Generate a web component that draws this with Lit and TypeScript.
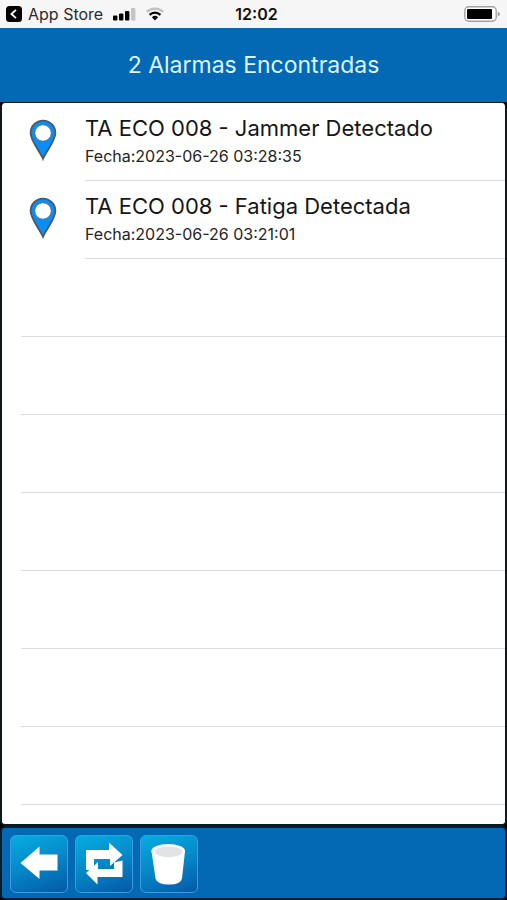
import { LitElement, html, css, svg } from "lit";
import { customElement, property } from "lit/decorators.js";

interface Alarm {
  title: string;
  date: string;
}

const ALARMS: Alarm[] = [
  { title: "TA ECO 008 - Jammer Detectado", date: "2023-06-26 03:28:35" },
  { title: "TA ECO 008 - Fatiga Detectada", date: "2023-06-26 03:21:01" },
];

const EMPTY_ROWS = Array.from({ length: 8 });

@customElement("status-bar")
class StatusBar extends LitElement {
  static styles = css`
    :host {
      display: grid;
      grid-template-columns: 1fr auto 1fr;
      align-items: center;
      height: 28px;
      padding-left: 6px;
      background: #f6f6f6;
      color: #111;
      font-size: 16px;
      line-height: 20px;
    }
    .left {
      display: flex;
      align-items: center;
      color: #2b2b2b;
    }
    .back {
      display: flex;
      align-items: center;
      gap: 6px;
      color: inherit;
      text-decoration: none;
    }
    .signal {
      margin-left: 10px;
    }
    .wifi {
      margin-left: 10px;
    }
    .time {
      font-weight: 600;
    }
    .battery {
      justify-self: end;
      margin-right: 6px;
    }
    svg {
      display: block;
    }
  `;

  render() {
    return html`
      <div class="left">
        <a class="back" href="#">
          <svg width="16" height="16" viewBox="0 0 16 16" aria-hidden="true">
            <rect width="16" height="16" rx="3.5" fill="#000" />
            <path d="M10 3.8 5.4 8l4.6 4.2" fill="none" stroke="#fff" stroke-width="1.8" />
          </svg>
          <span>App Store</span>
        </a>
        <svg class="signal" width="23" height="14" viewBox="0 0 23 14" aria-hidden="true">
          <rect x="0" y="8.5" width="4.4" height="5" rx="1" />
          <rect x="6" y="6.5" width="4.4" height="7" rx="1" />
          <rect x="12" y="4" width="4.4" height="9.5" rx="1" />
          <rect x="18" y="1" width="4.4" height="12.5" rx="1" fill="#c4c4c4" />
        </svg>
        <svg class="wifi" width="18" height="14" viewBox="0 0 18 14" aria-hidden="true">
          <path d="M.8 4.9a11.8 11.8 0 0 1 16.4 0" fill="none" stroke="#c0c0c0" stroke-width="2.3" />
          <path d="M3.6 7.9a7.7 7.7 0 0 1 10.8 0" fill="none" stroke="#000" stroke-width="2.3" />
          <path d="M5.9 10.2a4.6 4.6 0 0 1 6.2 0L9 13.4z" />
        </svg>
      </div>
      <span class="time">12:02</span>
      <svg class="battery" width="37" height="16" viewBox="0 0 37 16" aria-hidden="true">
        <rect x=".8" y=".8" width="31.4" height="14.4" rx="4" fill="#fff" stroke="#a0a0a0" stroke-width="1.4" />
        <rect x="3" y="3" width="25" height="10" rx="1" />
        <path d="M33.8 5.5q2.2 1 2.2 2.5t-2.2 2.5z" fill="#a0a0a0" />
      </svg>
    `;
  }
}

@customElement("alarm-row")
class AlarmRow extends LitElement {
  @property({ attribute: false }) alarm!: Alarm;

  static styles = css`
    :host {
      display: flex;
      height: 78px;
    }
    .pin {
      flex: none;
      margin: 16px 28px 0 27px;
    }
    .text {
      flex: 1;
      min-width: 0;
      box-sizing: border-box;
      padding-top: 11px;
      border-bottom: 1px solid #dcdcdc;
    }
    .title {
      margin: 0;
      font-size: 22px;
      font-weight: 400;
      line-height: 28px;
      color: #161616;
    }
    .date {
      margin: 4px 0 0;
      font-size: 16px;
      line-height: 20px;
      color: #242424;
    }
  `;

  render() {
    return html`
      <svg class="pin" width="28" height="42" viewBox="0 0 28 42" aria-hidden="true">
        <path
          d="M14 39.8C11.6 33.5 1.6 22 1.6 14A12.4 12.4 0 0 1 26.4 14C26.4 22 16.4 33.5 14 39.8Z"
          fill="#0a8df4"
          stroke="#4b5a66"
          stroke-width="1.8"
        />
        <circle cx="14" cy="14" r="8.3" fill="#fff" stroke="#44799f" stroke-width="1" />
      </svg>
      <div class="text">
        <h2 class="title">${this.alarm.title}</h2>
        <p class="date">Fecha:${this.alarm.date}</p>
      </div>
    `;
  }
}

const arrowIcon = svg`
  <path d="M10.5 28 29.5 11.5V19.5H47.5V35.5H29.5V44Z" fill="#fff" />
`;

const swapIcon = svg`
  <path d="M11 15H34V7.5L47.5 20 35 31V24H19V35H11Z" fill="#fff" />
  <path d="M47.5 25.5V42H22.5V49.5L11 38 23 27V34H39V27.5Z" fill="#fff" />
`;

const trashIcon = svg`
  <path d="M11.5 16 15.5 43.5Q17 49.5 29 49.5T42 43.5L45 16Z" fill="#fff" />
  <ellipse cx="28.2" cy="16" rx="16.8" ry="7" fill="#fff" />
  <ellipse cx="28.5" cy="16.8" rx="14" ry="5.4" fill="#e2e3e4" />
`;

const ACTIONS = [
  { label: "Volver", icon: arrowIcon },
  { label: "Actualizar", icon: swapIcon },
  { label: "Eliminar", icon: trashIcon },
];

@customElement("app-root")
class AppRoot extends LitElement {
  static styles = css`
    :host {
      display: flex;
      flex-direction: column;
      height: 100vh;
      background: #000;
      font-family: Inter, "Liberation Sans", sans-serif;
    }
    .header {
      display: flex;
      align-items: center;
      justify-content: center;
      flex: none;
      height: 74px;
      background: #0369b4;
    }
    .heading {
      margin: 0;
      font-size: 23px;
      font-weight: 400;
      line-height: 32px;
      color: #dff3ff;
    }
    .list {
      flex: 1;
      min-height: 0;
      overflow: hidden;
      margin: 0;
      padding: 0;
      list-style: none;
      background: #fff;
      border: 2px solid #10181f;
      border-top-width: 1px;
      border-radius: 5px;
    }
    .empty {
      box-sizing: border-box;
      height: 78px;
      margin-left: 19px;
      border-bottom: 1px solid #dcdcdc;
    }
    .toolbar {
      display: flex;
      flex: none;
      gap: 7px;
      padding: 7px 8px 5px;
      background: #0369b4;
      border: 2px solid #061c2d;
      border-radius: 5px;
    }
    .action {
      width: 58px;
      height: 58px;
      padding: 0;
      border: 1px solid #3d9be0;
      border-radius: 6px;
      background: linear-gradient(160deg, #05aee2, #0587c8 50%, #0459a6);
    }
    .icon {
      display: block;
      width: 100%;
      height: 100%;
    }
  `;

  render() {
    return html`
      <status-bar></status-bar>
      <header class="header">
        <h1 class="heading">${ALARMS.length} Alarmas Encontradas</h1>
      </header>
      <ul class="list">
        ${ALARMS.map((alarm) => html`<li><alarm-row .alarm=${alarm}></alarm-row></li>`)}
        ${EMPTY_ROWS.map(() => html`<li class="empty" aria-hidden="true"></li>`)}
      </ul>
      <nav class="toolbar">
        ${ACTIONS.map(
          (action) => html`
            <button class="action" type="button" aria-label=${action.label}>
              <svg class="icon" viewBox="1 1 56 56" aria-hidden="true">${action.icon}</svg>
            </button>
          `
        )}
      </nav>
    `;
  }
}
